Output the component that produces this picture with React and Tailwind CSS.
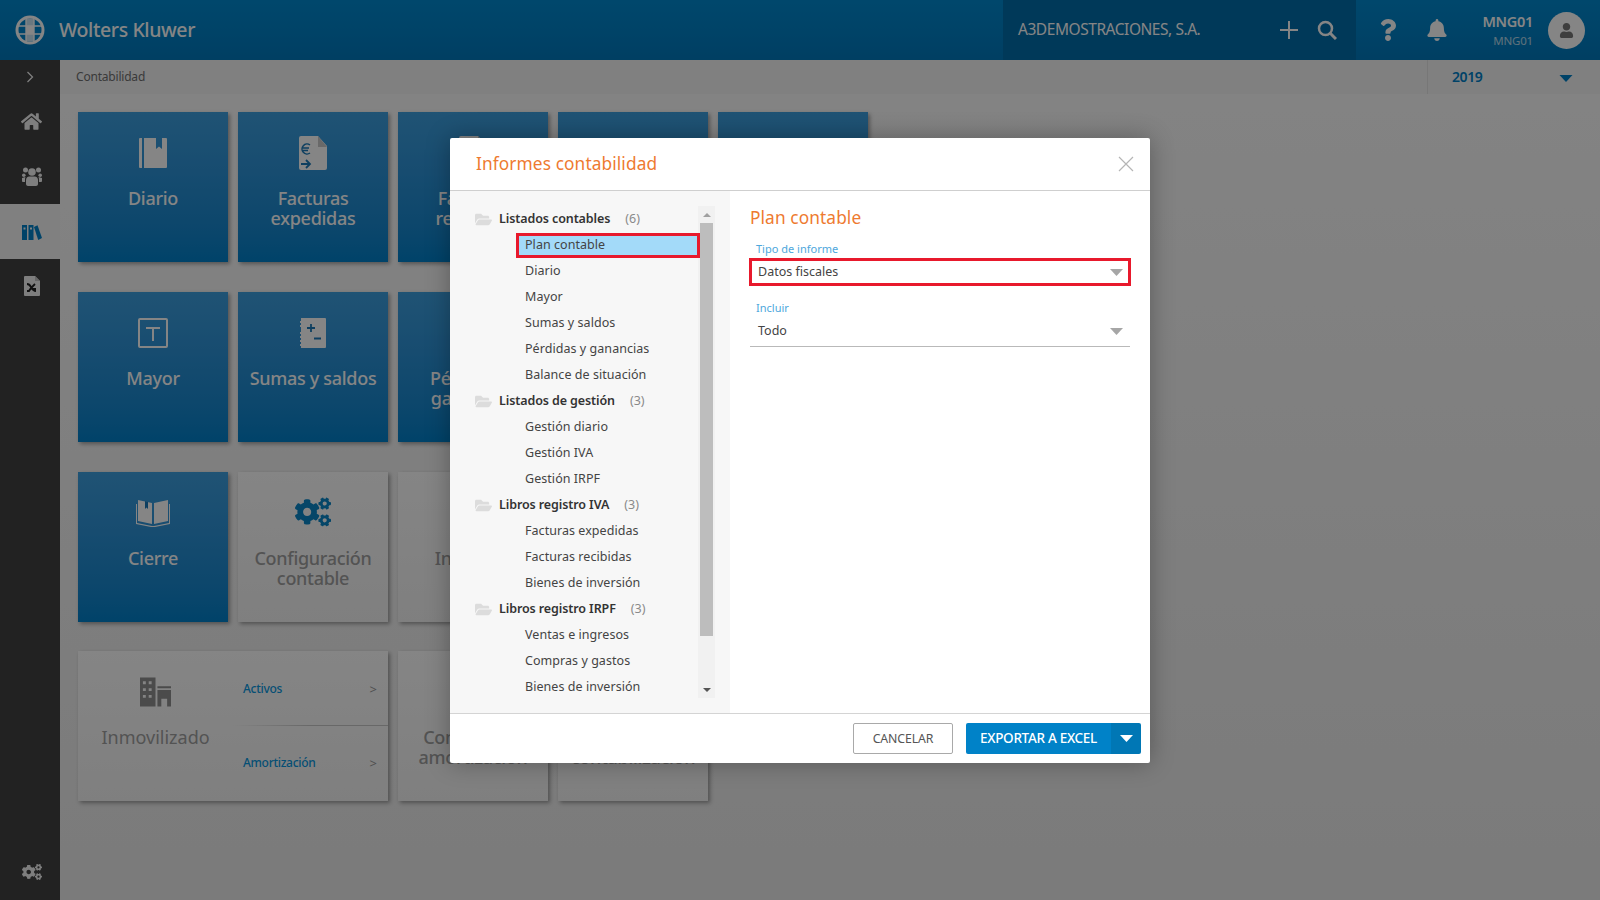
import React from "react";
import { FaHome, FaFolderOpen, FaBell, FaQuestion, FaCogs, FaUser } from "react-icons/fa";

const Logo = () => (
  <svg width="30" height="30" viewBox="0 0 30 30">
    <circle cx="15" cy="15" r="14.5" fill="#fff" />
    <circle cx="15" cy="15" r="11.500" fill="#0084cc" />
    <path d="M11 3.500v23M19 3.500v23M3.500 11h23M3.500 19h23" stroke="#fff" strokeWidth="1.400" />
    <rect x="11" y="11" width="8" height="8" fill="#fff" />
    <rect x="11" y="3.500" width="8" height="7.500" fill="#fff" opacity="0.8" />
    <rect x="11" y="19" width="8" height="7.500" fill="#fff" opacity="0.8" />
  </svg>
);

const TileIcon = ({ name, c }) => {
  const bg = c;
  if (name === "book")
    return (
      <svg width="28" height="32" viewBox="0 0 28 32">
        <path d="M0 2a1 1 0 0 1 1-1h2v30H1a1 1 0 0 1-1-1z" fill="#fff" />
        <path d="M5 1h22a1 1 0 0 1 1 1v28a1 1 0 0 1-1 1H5zM17 1v11l3-2.500 3 2.500V1z" fill="#fff" fillRule="evenodd" />
      </svg>
    );
  if (name === "doc")
    return (
      <svg width="28" height="34" viewBox="0 0 28 34">
        <path d="M2 0h17l9 10v22a2 2 0 0 1-2 2H2a2 2 0 0 1-2-2V2a2 2 0 0 1 2-2z" fill="#fff" />
        <path d="M19 0l9 11h-9z" fill="#c9c9c9" />
        <path d="M11 9a5 5 0 1 0 0 8M3 12h7M3 14.500h6" stroke={bg} strokeWidth="1.500" fill="none" />
        <path d="M2 28h9M7 24l4 4-4 4" stroke={bg} strokeWidth="1.800" fill="none" />
      </svg>
    );
  if (name === "t")
    return (
      <svg width="30" height="30" viewBox="0 0 30 30">
        <rect x="1" y="1" width="28" height="28" rx="1" fill="none" stroke="#fff" strokeWidth="2" />
        <path d="M8 9h14v2H16v12h-2V11H8z" fill="#fff" />
      </svg>
    );
  if (name === "sum")
    return (
      <svg width="26" height="30" viewBox="0 0 26 30">
        <path d="M1 0h24a1 1 0 0 1 1 1v28a1 1 0 0 1-1 1H1v-2H0v-2h1v-2H0v-2h1v-2H0v-2h1v-2H0v-2h1V9H0V7h1V5H0V3h1z" fill="#fff" />
        <path d="M7 10h8M11 6v8" stroke={bg} strokeWidth="1.800" />
        <path d="M14 20.500h7" stroke={bg} strokeWidth="2" />
      </svg>
    );
  if (name === "open")
    return (
      <svg width="34" height="28" viewBox="0 0 34 28">
        <path d="M2 1l14 3v21L2 22z" fill="#fff" />
        <path d="M32 1L18 4v21l14-3z" fill="#fff" />
        <path d="M0 5h1v19l15 3h2l15-3V5h1v20l-15 3h-4L0 25z" fill="#fff" />
        <path d="M12 3v7l-1.500-1.500L9 10V2z" fill={bg} />
      </svg>
    );
  if (name === "cogs") return <FaCogs size={36} color={bg} className="-mt-[3px]" />;
  return null;
};

const Tile = ({ label, icon, dark = true }) => (
  <div
    className={`w-[150px] h-[150px] flex flex-col items-center pt-[25px] shadow-[2px_2px_4px_rgba(0,0,0,0.35)] ${
      dark ? "bg-gradient-to-b from-[#3e9fdf] to-[#0080ca] text-white" : "bg-gradient-to-b from-[#ffffff] to-[#f4f4f4] text-[#a0a0a0]"
    }`}
  >
    <div className="h-[32px] flex items-center justify-center">{icon && <TileIcon name={icon} c={dark ? "#1c7ab8" : "#0a86c8"} />}</div>
    <div className="mt-[19px] px-2 text-center text-[18px] font-medium leading-[20px] tracking-[-0.3px]">{label}</div>
  </div>
);

const Caret = ({ className = "", w = 13, h = 7, fill = "#a6a6a6" }) => (
  <svg className={className} width={w} height={h} viewBox="0 0 13 7"><path d="M0 0h13L6.500 7z" fill={fill} /></svg>
);

const tree = [
  ["Listados contables", "(6)", ["Plan contable", "Diario", "Mayor", "Sumas y saldos", "Pérdidas y ganancias", "Balance de situación"]],
  ["Listados de gestión", "(3)", ["Gestión diario", "Gestión IVA", "Gestión IRPF"]],
  ["Libros registro IVA", "(3)", ["Facturas expedidas", "Facturas recibidas", "Bienes de inversión"]],
  ["Libros registro IRPF", "(3)", ["Ventas e ingresos", "Compras y gastos", "Bienes de inversión"]],
];

export default function App() {
  return (
    <div className="relative w-[1600px] h-[900px] overflow-hidden font-['Noto_Sans',sans-serif] bg-white">
      {/* header */}
      <header className="h-[60px] flex items-center bg-gradient-to-b from-[#0089d0] to-[#0079bd] text-white">
        <div className="w-[59px] pl-[15px] flex items-center"><Logo /></div>
        <div className="text-[19.500px] font-medium tracking-[-0.4px]">Wolters Kluwer</div>
        <div className="flex-1" />
        <div className="w-[353px] h-full bg-[#006dab] flex items-center pl-[15px]">
          <span className="text-[15.500px] tracking-[-0.45px]">A3DEMOSTRACIONES, S.A.</span>
          <div className="flex-1" />
          <svg className="mr-[18px]" width="20" height="20" viewBox="0 0 20 20"><path d="M10 1v18M1 10h18" stroke="#fff" strokeWidth="2" /></svg>
          <svg className="mr-[19px]" width="20" height="20" viewBox="0 0 20 20"><circle cx="8.500" cy="8.500" r="6.500" fill="none" stroke="#fff" strokeWidth="2.500" /><path d="M13 13l6 6" stroke="#fff" strokeWidth="3" /></svg>
        </div>
        <div className="w-[244px] h-full flex items-center">
          <FaQuestion size={22} className="ml-[21px]" />
          <FaBell size={22} className="ml-[27px]" />
          <div className="flex-1 flex flex-col items-end pr-[15px]">
            <div className="mb-[3px] text-[14.500px] leading-[18px] font-semibold tracking-[-0.3px]">MNG01</div>
            <div className="text-[11.500px] leading-[15px] opacity-70 tracking-[-0.2px]">MNG01</div>
          </div>
          <div className="w-[37px] h-[37px] rounded-full bg-white mr-[15px] flex items-center justify-center"><FaUser size={15} color="#777777" /></div>
        </div>
      </header>

      <div className="flex h-[840px]">
        {/* sidebar */}
        <nav className="w-[60px] bg-[#424242] flex flex-col items-center text-[#f2f2f2]">
          <div className="h-[34px] flex items-center justify-center">
            <svg width="8" height="12" viewBox="0 0 8 12"><path d="M1.500 1l5 5-5 5" fill="none" stroke="#f2f2f2" strokeWidth="1.300" /></svg>
          </div>
          <div className="h-[54px] w-full pl-[3px] flex items-center justify-center"><FaHome size={21} /></div>
          <div className="h-[56px] w-full pl-[3px] flex items-center justify-center">
            <svg width="20" height="19" viewBox="0 0 20 19" fill="#f2f2f2">
              <circle cx="3.500" cy="3" r="2.500" /><circle cx="16.500" cy="3" r="2.500" /><circle cx="10" cy="5" r="3.800" />
              <circle cx="1.800" cy="8.300" r="1.800" /><circle cx="18.200" cy="8.300" r="1.800" />
              <path d="M4 13c0-2.500 2-3.500 3-3.500h6c1 0 3 1 3 3.500v4c0 1-1 2-2 2H6c-1 0-2-1-2-2z" />
              <path d="M0 11l3.500-1c-.5 1-.5 2-.5 3v2H1c-.5 0-1-.5-1-1zM20 11l-3.500-1c.5 1 .5 2 .5 3v2h2c.5 0 1-.5 1-1z" />
            </svg>
          </div>
          <div className="h-[55px] w-full pl-[3px] bg-[#f6f6f6] flex items-center justify-center">
            <svg width="20" height="16" viewBox="0 0 20 16" fill="#0080c8"><path d="M0 1h5v15H0zM6.500 1h5v15h-5z" /><path d="M12 3l3.500-1.800L20 14l-3.800 2z" /><path d="M1.500 3.500h2v2h-2zM8 3.500h2v2H8z" fill="#f6f6f6" /></svg>
          </div>
          <div className="h-[54px] w-full pl-[3px] flex items-center justify-center">
            <svg width="16" height="20" viewBox="0 0 16 20"><path d="M1 0h10l5 5v14a1 1 0 0 1-1 1H1a1 1 0 0 1-1-1V1a1 1 0 0 1 1-1z" fill="#f2f2f2" /><path d="M11 0l5 5h-5z" fill="#c4c4c4" /><path d="M3 8c2 0 3 1 4 3s2 4 5 4M11 8c-2 2-5 5-6 7H3M8 13h4" stroke="#222" strokeWidth="1.800" fill="none" /></svg>
          </div>
          <div className="flex-1" />
          <div className="h-[38px] w-full pl-[3px] flex items-start justify-center"><FaCogs size={20} /></div>
        </nav>

        {/* main */}
        <main className="flex-1 flex flex-col bg-gradient-to-b from-[#fcfcfc] to-[#ebebeb]">
          <div className="h-[34px] shrink-0 bg-[#f5f5f5] flex items-center pl-[16px]">
            <span className="text-[12px] tracking-[-0.2px] text-[#707070]">Contabilidad</span>
            <div className="flex-1" />
            <div className="w-[173px] h-full border-l border-[#e4e4e4] flex items-center pl-[24px] pr-[27px] justify-between">
              <span className="pb-[2px] text-[14px] font-semibold tracking-[-0.4px] text-[#0080c8]">2019</span>
              <Caret fill="#0080c8" w={14} h={7} className="mt-[2px]" />
            </div>
          </div>
          <div className="pl-[18px] pt-[18px] flex flex-col gap-[30px]">
            <div className="flex gap-[10px]">
              <Tile label="Diario" icon="book" />
              <Tile label={<>Facturas<br />expedidas</>} icon="doc" />
              <Tile label={<>Facturas<br />recibidas</>} icon="doc" />
              <Tile label="Asientos" />
              <Tile label="Balance" />
            </div>
            <div className="flex gap-[10px]">
              <Tile label="Mayor" icon="t" />
              <Tile label="Sumas y saldos" icon="sum" />
              <Tile label={<>Pérdidas y<br />ganancias</>} />
            </div>
            <div className="flex gap-[10px]">
              <Tile label="Cierre" icon="open" />
              <Tile label={<>Configuración<br />contable</>} icon="cogs" dark={false} />
              <Tile label="Informes" dark={false} />
            </div>
            <div className="flex gap-[10px] -mt-[1px]">
              <div className="w-[310px] h-[150px] flex bg-gradient-to-b from-[#ffffff] to-[#f4f4f4] shadow-[2px_2px_4px_rgba(0,0,0,0.35)]">
                <div className="w-[155px] flex flex-col items-center pt-[26px]">
                  <svg width="31" height="30" viewBox="0 0 32 30" fill="#909090" fillRule="evenodd">
                    <path d="M0 0h16v30H0zM3 4v3h3V4zM9 4v3h3V4zM3 11v3h3v-3zM9 11v3h3v-3zM3 18v3h3v-3zM9 18v3h3v-3z" />
                    <path d="M18 9h14v2H18zM18 13h14v17h-4v-8h-6v8h-4z" />
                  </svg>
                  <div className="mt-[20px] text-[18px] leading-[20px] text-[#a0a0a0]">Inmovilizado</div>
                </div>
                <div className="flex-1 flex flex-col">
                  <div className="relative h-[75px] flex items-start justify-between pt-[29px] pr-[11px] pl-[10px] text-[12px] leading-[18px]">
                    <span className="text-[#0a98e0] font-medium tracking-[-0.3px]">Activos</span><span className="text-[13px] text-[#999999]">&gt;</span>
                    <div className="absolute left-0 right-0 bottom-0 h-px bg-gradient-to-r from-transparent via-[#c8c8c8] to-[#c8c8c8]" />
                  </div>
                  <div className="flex items-start justify-between pt-[28px] pr-[11px] pl-[10px] text-[12px] leading-[18px]">
                    <span className="text-[#0a98e0] font-medium tracking-[-0.3px]">Amortización</span><span className="text-[13px] text-[#999999]">&gt;</span>
                  </div>
                </div>
              </div>
              <Tile label={<>Contabilizar<br />amortización</>} dark={false} />
              <Tile label={<>Asientos<br />contabilización</>} dark={false} />
            </div>
          </div>
        </main>
      </div>

      {/* dim overlay */}
      <div className="absolute inset-0 bg-black/[0.48]" />

      {/* modal */}
      <div className="absolute left-[450px] top-[138px] w-[700px] h-[625px] bg-white rounded-[2px] shadow-[0_0_24px_rgba(0,0,0,0.3)] flex flex-col">
        <div className="h-[53px] shrink-0 border-b border-[#cfcfcf] flex items-center justify-between pl-[25px] pr-[16px]">
          <span className="pb-[1px] pl-px text-[17.300px] tracking-[0.1px] text-[#ee7a30]">Informes contabilidad</span>
          <svg width="16" height="16" viewBox="0 0 16 16"><path d="M1 1l14 14M15 1L1 15" stroke="#b5b5b5" strokeWidth="1.200" /></svg>
        </div>
        <div className="flex-1 flex min-h-0">
          <div className="w-[280px] bg-[#f7f7f7] flex pl-[25px] pr-[15px] pt-[14px] items-start">
            <div className="flex-1 min-w-0 relative z-10 pt-px">
              {tree.map(([title, count, items], i) => (
                <div key={i}>
                  <div className="h-[26px] flex items-center text-[12.500px] text-[#333333]">
                    <FaFolderOpen size={17} color="#dcdcdc" className="mr-[7px]" />
                    <span className="font-semibold tracking-[-0.1px]">{title}</span>
                    <span className="ml-[15px] text-[#8a8a8a]">{count}</span>
                  </div>
                  {items.map((it, j) => {
                    const sel = i === 0 && j === 0;
                    return sel ? (
                      <div key={j} className="h-[26px] ml-[41px] -mr-[2px] flex items-end">
                        <div className="w-full h-[25px] border-[3px] border-[#e8192c] bg-[#a3daf9] flex items-center pl-[6px] text-[12.500px] text-[#444444] tracking-[0.05px]">{it}</div>
                      </div>
                    ) : (
                      <div key={j} className="h-[26px] pl-[50px] flex items-center text-[12.500px] text-[#444444] tracking-[0.05px]">{it}</div>
                    );
                  })}
                </div>
              ))}
            </div>
            <div className="w-[17px] h-[492px] mt-[1px] bg-[#f1f1f1] flex flex-col items-center shrink-0">
              <div className="h-[17px] flex items-center justify-center"><svg width="8" height="4" viewBox="0 0 8 4"><path d="M0 4h8L4 0z" fill="#a0a0a0" /></svg></div>
              <div className="w-[13px] h-[413px] bg-[#bdbdbd]" />
              <div className="flex-1" />
              <div className="h-[17px] flex items-center justify-center"><svg width="8" height="4" viewBox="0 0 8 4"><path d="M0 0h8L4 4z" fill="#555555" /></svg></div>
            </div>
          </div>
          <div className="flex-1 px-[20px] pt-[15px]">
            <div className="text-[17.300px] leading-[24px] tracking-[0.1px] text-[#ee7a30]">Plan contable</div>
            <div className="mt-[12px] pl-[6px] text-[11px] leading-[14px] text-[#4ea7dc]">Tipo de informe</div>
            <div className="mt-[2px] -mx-[1px] h-[28px] border-[3px] border-[#e8192c] flex items-center justify-between pl-[6px] pr-[5px] text-[12.500px] text-[#444444]">
              <span>Datos fiscales</span><Caret />
            </div>
            <div className="mt-[15px] pl-[6px] text-[11px] leading-[14px] text-[#4ea7dc]">Incluir</div>
            <div className="mt-[2px] h-[30px] border-b border-[#b9b9b9] flex items-center justify-between pl-[8px] pr-[7px] text-[12.500px] text-[#444444]">
              <span>Todo</span><Caret />
            </div>
          </div>
        </div>
        <div className="h-[50px] shrink-0 border-t border-[#d4d4d4] flex items-center justify-end pr-[9px]">
          <button className="w-[100px] h-[31px] pt-px border border-[#a9a9a9] rounded-[2px] text-[12.300px] text-[#555555] tracking-[-0.1px] bg-white">CANCELAR</button>
          <div className="ml-[13px] w-[175px] h-[31px] rounded-[2px] overflow-hidden flex text-white">
            <div className="flex-1 bg-[#0082c8] flex items-center justify-center pb-px text-[13.500px] font-medium tracking-[-0.3px]">EXPORTAR A EXCEL</div>
            <div className="w-[30px] bg-[#0077b5] flex items-center justify-center"><Caret fill="#fff" /></div>
          </div>
        </div>
      </div>
    </div>
  );
}
